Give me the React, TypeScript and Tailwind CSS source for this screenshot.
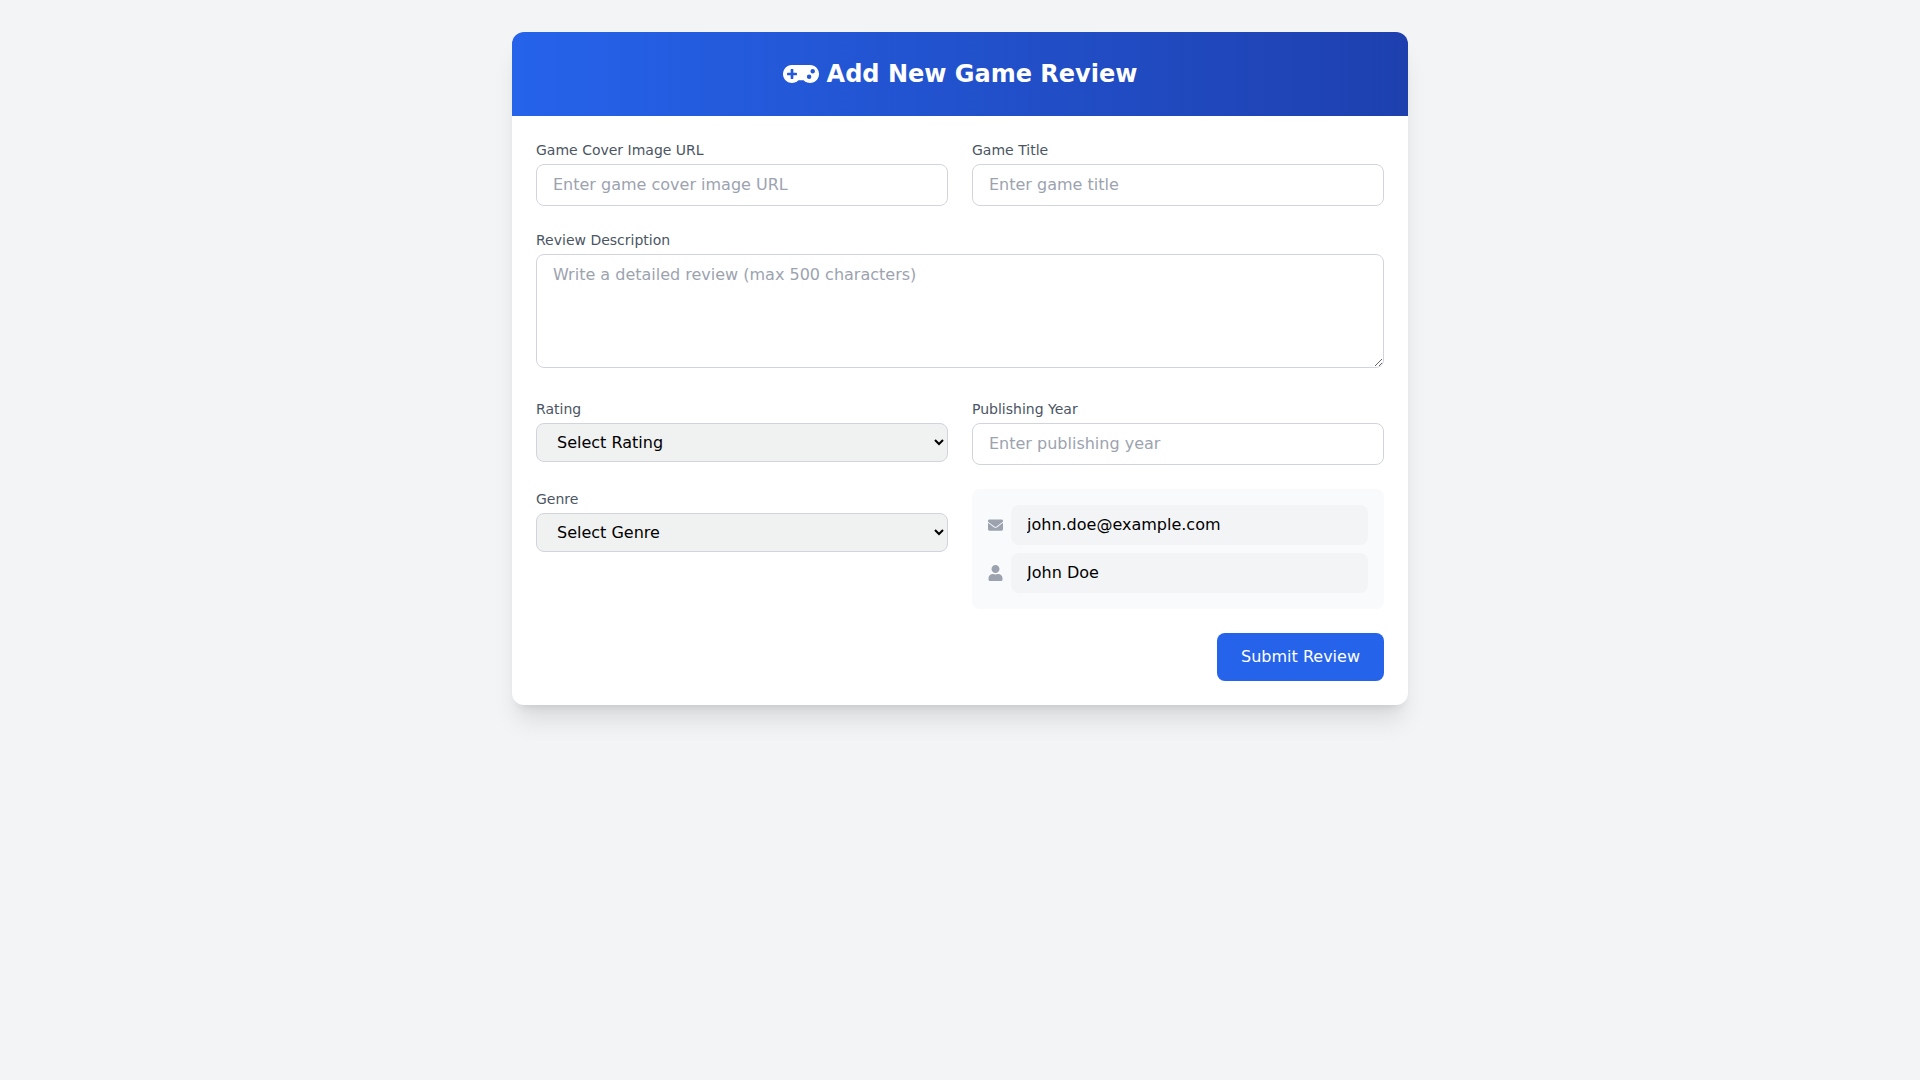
import { FaGamepad, FaEnvelope, FaUser } from 'react-icons/fa';

const fieldClass =
  'w-full border border-[#d1d5db] rounded-lg px-4 py-2 text-base placeholder:text-[#9ca3af] bg-white';
const selectClass = 'w-full border border-[#d1d5db] rounded-lg px-4 py-2 text-base bg-[#f0f1f1] text-black';
const labelClass = 'block text-sm text-[#4b5563] mb-1';

export default function App() {
  return (
    <div className="min-h-screen bg-[#f3f4f6] font-['DejaVu_Sans',sans-serif]">
      <div className="max-w-4xl mx-auto pt-8">
        <div className="bg-white rounded-xl shadow-xl overflow-hidden">
          {/* Header */}
          <div className="bg-gradient-to-r from-[#2563eb] to-[#1e40af] p-6">
            <h1 className="flex items-center justify-center gap-2 text-2xl font-bold text-white">
              <FaGamepad className="w-9 h-9" />
              Add New Game Review
            </h1>
          </div>

          <form className="p-6 space-y-6">
            <div className="grid grid-cols-2 gap-6">
              <div>
                <label className={labelClass}>Game Cover Image URL</label>
                <input type="text" placeholder="Enter game cover image URL" className={fieldClass} />
              </div>
              <div>
                <label className={labelClass}>Game Title</label>
                <input type="text" placeholder="Enter game title" className={fieldClass} />
              </div>
            </div>

            <div>
              <label className={labelClass}>Review Description</label>
              <textarea
                rows={4}
                placeholder="Write a detailed review (max 500 characters)"
                className={fieldClass}
              />
            </div>

            <div className="grid grid-cols-2 gap-6">
              <div>
                <label className={labelClass}>Rating</label>
                <select className={selectClass}>
                  <option>Select Rating</option>
                </select>
              </div>
              <div>
                <label className={labelClass}>Publishing Year</label>
                <input type="number" placeholder="Enter publishing year" className={fieldClass} />
              </div>
              <div>
                <label className={labelClass}>Genre</label>
                <select className={selectClass}>
                  <option>Select Genre</option>
                </select>
              </div>
              <div className="bg-[#f9fafb] rounded-lg p-4 space-y-2">
                <div className="flex items-center gap-2">
                  <FaEnvelope className="w-[15px] h-4 text-[#9ca3af]" />
                  <input
                    type="email"
                    readOnly
                    value="john.doe@example.com"
                    className="flex-1 bg-[#f3f4f6] rounded-lg px-4 py-2 text-base text-black"
                  />
                </div>
                <div className="flex items-center gap-2">
                  <FaUser className="w-[15px] h-4 text-[#9ca3af]" />
                  <input
                    type="text"
                    readOnly
                    value="John Doe"
                    className="flex-1 bg-[#f3f4f6] rounded-lg px-4 py-2 text-base text-black"
                  />
                </div>
              </div>
            </div>

            <div className="flex justify-end">
              <button type="button" className="bg-[#2563eb] text-white rounded-lg px-6 py-3 text-base">
                Submit Review
              </button>
            </div>
          </form>
        </div>
      </div>
    </div>
  );
}
